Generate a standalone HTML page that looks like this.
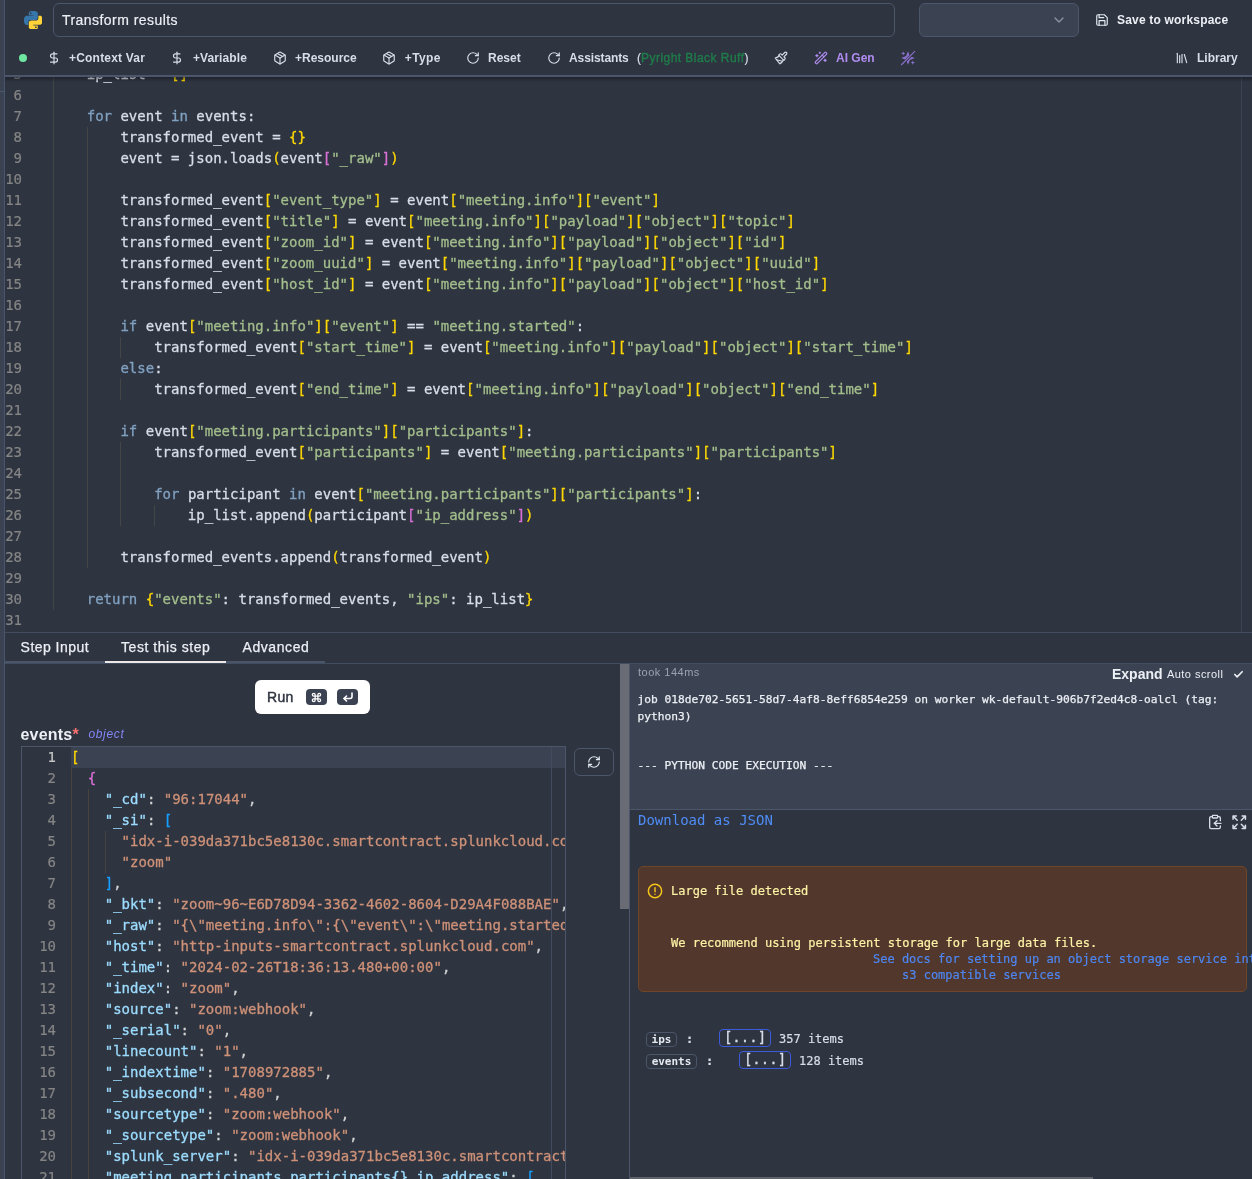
<!DOCTYPE html>
<html lang="en">
<head>
<meta charset="utf-8">
<title>Transform results</title>
<style>
*{box-sizing:border-box;margin:0;padding:0}
html,body{width:1252px;height:1179px;overflow:hidden;background:#2e3440}
#root{position:absolute;left:0;top:0;width:1252px;height:1179px;overflow:hidden;will-change:transform;transform:translateZ(0)}
body{position:relative;font-family:"Liberation Sans",Arial,sans-serif;color:#e5e9f0;-webkit-font-smoothing:antialiased}
.abs{position:absolute}

svg.ic{position:absolute;fill:none;stroke:currentColor;stroke-width:2;stroke-linecap:round;stroke-linejoin:round}
.mono{font-family:"DejaVu Sans Mono","Liberation Mono",monospace}
/* left strip */
#strip{left:0;top:0;width:5px;height:1179px;background:#3b4252;border-right:1px solid #47556e}
/* header */
#title{left:53px;top:3px;width:842px;height:34px;border:1px solid #4c566a;border-radius:6px;font-size:14px;line-height:33px;padding-left:8px;color:#eceff4;letter-spacing:.45px;-webkit-text-stroke:.2px}
#sel{left:919px;top:3px;width:160px;height:34px;border:1px solid #4c566a;border-radius:6px;background:#3b4252}
.tb{position:absolute;top:50px;height:16px;line-height:16px;font-size:12px;font-weight:bold;color:#d8dee9;white-space:nowrap}
#hdrline{left:5px;top:75px;width:1247px;height:2px;background:#4c566a}
/* python editor */
#ed{left:5px;top:77px;width:1247px;height:555px;overflow:hidden}
#edin{position:absolute;left:0;top:-13px;width:100%;}
.ln{position:absolute;left:0;height:21px;line-height:21px;font:14px/21px "DejaVu Sans Mono","Liberation Mono",monospace;color:#d8dee9;white-space:pre;padding-left:48px;-webkit-text-stroke:.3px}
.ln i{position:absolute;left:0;width:17px;text-align:right;font-style:normal;color:#858585;-webkit-text-stroke:.2px}
.k{color:#81a1c1}.s{color:#a3be8c}
.g{position:absolute;width:1px;background:#444546}
/* tabs */
#edline{left:5px;top:632px;width:1247px;height:1px;background:#434c5e}
.tab{position:absolute;top:638px;font-size:14px;line-height:18px;color:#eceff4;white-space:nowrap;-webkit-text-stroke:.25px}
/* json editor */
#je{left:21px;top:746px;width:545px;height:440px;border:1px solid #4c566a;border-bottom:0;overflow:hidden}
.jl{position:absolute;left:0;width:100%;height:21px;font:14px/21px "DejaVu Sans Mono","Liberation Mono",monospace;white-space:pre;color:#d4d4d4;-webkit-text-stroke:.3px}
.jl i{position:absolute;left:0;width:34px;text-align:right;font-style:normal;color:#858585;-webkit-text-stroke:.2px}
.jl b{position:absolute;left:49px;font-weight:normal}
.jl.cur i{color:#c6c6c6}
.jl.cur:before{content:"";position:absolute;left:49px;right:0;top:0;height:21px;background:#3b4252}
.jk{color:#9cdcfe}.jv{color:#ce9178}
.wt{position:absolute;font:12px/16px "DejaVu Sans Mono","Liberation Mono",monospace;color:#fdf2a6;white-space:pre;-webkit-text-stroke:.2px}
.jb{position:absolute;height:15px;border:1px solid #4c566a;border-radius:4px;font:bold 11px/13px "DejaVu Sans Mono","Liberation Mono",monospace;color:#e5e9f0;text-align:center}
.jt{position:absolute;font:12px/16px "DejaVu Sans Mono","Liberation Mono",monospace;color:#d8dee9;white-space:pre;-webkit-text-stroke:.2px}
.jx{position:absolute;width:52px;height:18px;border:1px solid #3b5bdb;border-radius:4px;font:14px/15px "DejaVu Sans Mono","Liberation Mono",monospace;color:#d8dee9;text-align:center;-webkit-text-stroke:.3px}
</style>
</head>
<body><div id="root">
<div id="strip" class="abs"></div>

<!-- ===== header row 1 ===== -->
<svg class="abs" style="left:23.7px;top:10.5px" width="18.6" height="18.6" viewBox="0 0 24 24">
<path fill="#3776ab" d="M14.25.18l.9.2.73.26.59.3.45.32.34.34.25.34.16.33.1.3.04.26.02.2-.01.13V8.5l-.05.63-.13.55-.21.46-.26.38-.3.31-.33.25-.35.19-.35.14-.33.1-.3.07-.26.04-.21.02H8.77l-.69.05-.59.14-.5.22-.41.27-.33.32-.27.35-.2.36-.15.37-.1.35-.07.32-.04.27-.02.21v3.06H3.17l-.21-.03-.28-.07-.32-.12-.35-.18-.36-.26-.36-.36-.35-.46-.32-.59-.28-.73-.21-.88-.14-1.05-.05-1.23.06-1.22.16-1.04.24-.87.32-.71.36-.57.4-.44.42-.33.42-.24.4-.16.36-.1.32-.05.24-.01h.16l.06.01h8.16v-.83H6.18l-.01-2.75-.02-.37.05-.34.11-.31.17-.28.25-.26.31-.23.38-.2.44-.18.51-.15.58-.12.64-.1.71-.06.77-.04.84-.02 1.27.05zm-6.3 1.98l-.23.33-.08.41.08.41.23.34.33.22.41.09.41-.09.33-.22.23-.34.08-.41-.08-.41-.23-.33-.33-.22-.41-.09-.41.09z"/>
<path fill="#ffd43b" d="M21.04 6.11l.28.06.32.12.35.18.36.27.36.35.35.47.32.59.28.73.21.88.14 1.04.05 1.23-.06 1.23-.16 1.04-.24.86-.32.71-.36.57-.4.45-.42.33-.42.24-.4.16-.36.09-.32.05-.24.02-.16-.01h-8.22v.82h5.84l.01 2.76.02.36-.05.34-.11.31-.17.29-.25.25-.31.24-.38.2-.44.17-.51.15-.58.13-.64.09-.71.07-.77.04-.84.01-1.27-.04-1.07-.14-.9-.2-.73-.25-.59-.3-.45-.33-.34-.34-.25-.34-.16-.33-.1-.3-.04-.25-.02-.2.01-.13v-5.34l.05-.64.13-.54.21-.46.26-.38.3-.32.33-.24.35-.2.35-.14.33-.1.3-.06.26-.04.21-.02.13-.01h5.84l.69-.05.59-.14.5-.21.41-.28.33-.32.27-.35.2-.36.15-.36.1-.35.07-.32.04-.28.02-.21V6.07h2.09l.14.01zm-6.47 14.25l-.23.33-.08.41.08.41.23.33.33.23.41.08.41-.08.33-.23.23-.33.08-.41-.08-.41-.23-.33-.33-.23-.41-.08-.41.08z"/>
</svg>
<div id="title" class="abs">Transform results</div>
<div id="sel" class="abs"></div>
<svg class="ic" style="left:1051px;top:12px;color:#8b94a5" width="16" height="16" viewBox="0 0 24 24"><path d="m6 9 6 6 6-6"/></svg>
<svg class="ic" style="left:1095px;top:13px;color:#e5e9f0" width="14" height="14" viewBox="0 0 24 24"><path d="M19 21H5a2 2 0 0 1-2-2V5a2 2 0 0 1 2-2h11l5 5v11a2 2 0 0 1-2 2z"/><polyline points="17 21 17 13 7 13 7 21"/><polyline points="7 3 7 8 15 8"/></svg>
<div class="tb" style="left:1117px;top:12px;color:#eceff4;letter-spacing:.19px">Save to workspace</div>

<!-- ===== header row 2 ===== -->
<div class="abs" style="left:19px;top:54px;width:8px;height:8px;border-radius:50%;background:#6ee7a0"></div>
<svg class="ic" style="left:47px;top:51px;color:#d8dee9" width="14" height="14" viewBox="0 0 24 24"><line x1="12" x2="12" y1="2" y2="22"/><path d="M17 5H9.5a3.5 3.5 0 0 0 0 7h5a3.5 3.5 0 0 1 0 7H6"/></svg>
<div class="tb" style="left:69px;letter-spacing:.2px">+Context Var</div>
<svg class="ic" style="left:170px;top:51px;color:#d8dee9" width="14" height="14" viewBox="0 0 24 24"><line x1="12" x2="12" y1="2" y2="22"/><path d="M17 5H9.5a3.5 3.5 0 0 0 0 7h5a3.5 3.5 0 0 1 0 7H6"/></svg>
<div class="tb" style="left:193px;letter-spacing:.1px">+Variable</div>
<svg class="ic" style="left:273px;top:51px;color:#d8dee9" width="14" height="14" viewBox="0 0 24 24"><path d="m7.5 4.27 9 5.15"/><path d="M21 8a2 2 0 0 0-1-1.73l-7-4a2 2 0 0 0-2 0l-7 4A2 2 0 0 0 3 8v8a2 2 0 0 0 1 1.73l7 4a2 2 0 0 0 2 0l7-4A2 2 0 0 0 21 16Z"/><path d="m3.3 7 8.7 5 8.7-5"/><path d="M12 22V12"/></svg>
<div class="tb" style="left:295px">+Resource</div>
<svg class="ic" style="left:382px;top:51px;color:#d8dee9" width="14" height="14" viewBox="0 0 24 24"><path d="m7.5 4.27 9 5.15"/><path d="M21 8a2 2 0 0 0-1-1.73l-7-4a2 2 0 0 0-2 0l-7 4A2 2 0 0 0 3 8v8a2 2 0 0 0 1 1.73l7 4a2 2 0 0 0 2 0l7-4A2 2 0 0 0 21 16Z"/><path d="m3.3 7 8.7 5 8.7-5"/><path d="M12 22V12"/></svg>
<div class="tb" style="left:404.800px;letter-spacing:.35px">+Type</div>
<svg class="ic" style="left:466px;top:51px;color:#d8dee9" width="14" height="14" viewBox="0 0 24 24"><path d="M21 12a9 9 0 1 1-9-9c2.52 0 4.93 1 6.74 2.74L21 8"/><path d="M21 3v5h-5"/></svg>
<div class="tb" style="left:488px">Reset</div>
<svg class="ic" style="left:547px;top:51px;color:#d8dee9" width="14" height="14" viewBox="0 0 24 24"><path d="M21 12a9 9 0 1 1-9-9c2.52 0 4.93 1 6.74 2.74L21 8"/><path d="M21 3v5h-5"/></svg>
<div class="tb" style="left:569px;letter-spacing:-.1px">Assistants</div>
<div class="tb" id="pyr" style="left:637px;font-weight:normal;-webkit-text-stroke:.2px">(<span style="color:#1f7d4b;letter-spacing:.46px;-webkit-text-stroke:.35px">Pyright Black Ruff</span>)</div>
<svg class="ic" style="left:774px;top:51px;color:#d8dee9" width="14" height="14" viewBox="0 0 24 24"><path d="M18.37 2.63 14 7l-1.59-1.59a2 2 0 0 0-2.82 0L8 7l9 9 1.59-1.59a2 2 0 0 0 0-2.82L17 10l4.37-4.37a2.12 2.12 0 1 0-3-3Z"/><path d="M9 8c-2 3-4 3.500-7 4l8 10c2-1 6-5 6-7"/><path d="M14.500 17.500 4.500 15"/></svg>
<svg class="ic" style="left:813.8px;top:51px;color:#b18cf0" width="14" height="14" viewBox="0 0 24 24"><path d="m21.64 3.64-1.28-1.28a1.21 1.21 0 0 0-1.72 0L2.36 18.64a1.21 1.21 0 0 0 0 1.72l1.28 1.28a1.2 1.2 0 0 0 1.72 0L21.64 5.36a1.2 1.2 0 0 0 0-1.72Z"/><path d="m14 7 3 3"/><path d="M5 6v4"/><path d="M19 14v4"/><path d="M10 2v2"/><path d="M7 8H3"/><path d="M21 16h-4"/><path d="M11 3H9"/></svg>
<div class="tb" style="left:836px;color:#b18cf0">AI Gen</div>
<svg class="abs" style="left:900px;top:50px" width="16" height="16" viewBox="0 0 24 24"><g fill="#8a6fcc"><path d="M12 1.800 14.900 9.100 22.200 12 14.900 14.900 12 22.200 9.100 14.900 1.800 12 9.100 9.100Z"/><path d="M4.800 1.800 5.700 4.300 8.200 5.200 5.700 6.100 4.800 8.600 3.900 6.100 1.400 5.200 3.900 4.300Z"/><path d="M19.200 15.600 20.100 18.100 22.600 19 20.100 19.900 19.200 22.400 18.300 19.900 15.800 19 18.300 18.100Z"/></g><path d="M6 19 18.500 6" stroke="#2e3440" stroke-width="3.800" fill="none"/><path d="M2.200 22.100 22.100 2.200" stroke="#8a6fcc" stroke-width="1.700" stroke-linecap="round" fill="none"/></svg>
<svg class="ic" style="left:1175px;top:51px;color:#d8dee9" width="14" height="14" viewBox="0 0 24 24"><path d="m16 6 4 14"/><path d="M12 6v14"/><path d="M8 8v12"/><path d="M4 4v16"/></svg>
<div class="tb" style="left:1197px">Library</div>
<div id="hdrline" class="abs"></div>
<div class="abs" style="left:5px;top:77px;width:1247px;height:5px;background:linear-gradient(rgba(10,12,18,.42),rgba(10,12,18,0));z-index:5"></div>
<div class="abs" style="left:0;top:91px;width:5px;height:1px;background:#4a5870"></div>

<!-- ===== python editor ===== -->
<div id="ed" class="abs">
<div id="edin">
<div class="ln" style="top:0px"><i>5</i>    ip_list = <span style="color:#ffd700">[</span><span style="color:#ffd700">]</span></div>
<div class="ln" style="top:21px"><i>6</i></div>
<div class="ln" style="top:42px"><i>7</i>    <span class="k">for</span> event <span class="k">in</span> events:</div>
<div class="ln" style="top:63px"><i>8</i>        transformed_event = <span style="color:#ffd700">{</span><span style="color:#ffd700">}</span></div>
<div class="ln" style="top:84px"><i>9</i>        event = json.loads<span style="color:#ffd700">(</span>event<span style="color:#da70d6">[</span><span class="s">&quot;_raw&quot;</span><span style="color:#da70d6">]</span><span style="color:#ffd700">)</span></div>
<div class="ln" style="top:105px"><i>10</i></div>
<div class="ln" style="top:126px"><i>11</i>        transformed_event<span style="color:#ffd700">[</span><span class="s">&quot;event_type&quot;</span><span style="color:#ffd700">]</span> = event<span style="color:#ffd700">[</span><span class="s">&quot;meeting.info&quot;</span><span style="color:#ffd700">]</span><span style="color:#ffd700">[</span><span class="s">&quot;event&quot;</span><span style="color:#ffd700">]</span></div>
<div class="ln" style="top:147px"><i>12</i>        transformed_event<span style="color:#ffd700">[</span><span class="s">&quot;title&quot;</span><span style="color:#ffd700">]</span> = event<span style="color:#ffd700">[</span><span class="s">&quot;meeting.info&quot;</span><span style="color:#ffd700">]</span><span style="color:#ffd700">[</span><span class="s">&quot;payload&quot;</span><span style="color:#ffd700">]</span><span style="color:#ffd700">[</span><span class="s">&quot;object&quot;</span><span style="color:#ffd700">]</span><span style="color:#ffd700">[</span><span class="s">&quot;topic&quot;</span><span style="color:#ffd700">]</span></div>
<div class="ln" style="top:168px"><i>13</i>        transformed_event<span style="color:#ffd700">[</span><span class="s">&quot;zoom_id&quot;</span><span style="color:#ffd700">]</span> = event<span style="color:#ffd700">[</span><span class="s">&quot;meeting.info&quot;</span><span style="color:#ffd700">]</span><span style="color:#ffd700">[</span><span class="s">&quot;payload&quot;</span><span style="color:#ffd700">]</span><span style="color:#ffd700">[</span><span class="s">&quot;object&quot;</span><span style="color:#ffd700">]</span><span style="color:#ffd700">[</span><span class="s">&quot;id&quot;</span><span style="color:#ffd700">]</span></div>
<div class="ln" style="top:189px"><i>14</i>        transformed_event<span style="color:#ffd700">[</span><span class="s">&quot;zoom_uuid&quot;</span><span style="color:#ffd700">]</span> = event<span style="color:#ffd700">[</span><span class="s">&quot;meeting.info&quot;</span><span style="color:#ffd700">]</span><span style="color:#ffd700">[</span><span class="s">&quot;payload&quot;</span><span style="color:#ffd700">]</span><span style="color:#ffd700">[</span><span class="s">&quot;object&quot;</span><span style="color:#ffd700">]</span><span style="color:#ffd700">[</span><span class="s">&quot;uuid&quot;</span><span style="color:#ffd700">]</span></div>
<div class="ln" style="top:210px"><i>15</i>        transformed_event<span style="color:#ffd700">[</span><span class="s">&quot;host_id&quot;</span><span style="color:#ffd700">]</span> = event<span style="color:#ffd700">[</span><span class="s">&quot;meeting.info&quot;</span><span style="color:#ffd700">]</span><span style="color:#ffd700">[</span><span class="s">&quot;payload&quot;</span><span style="color:#ffd700">]</span><span style="color:#ffd700">[</span><span class="s">&quot;object&quot;</span><span style="color:#ffd700">]</span><span style="color:#ffd700">[</span><span class="s">&quot;host_id&quot;</span><span style="color:#ffd700">]</span></div>
<div class="ln" style="top:231px"><i>16</i></div>
<div class="ln" style="top:252px"><i>17</i>        <span class="k">if</span> event<span style="color:#ffd700">[</span><span class="s">&quot;meeting.info&quot;</span><span style="color:#ffd700">]</span><span style="color:#ffd700">[</span><span class="s">&quot;event&quot;</span><span style="color:#ffd700">]</span> == <span class="s">&quot;meeting.started&quot;</span>:</div>
<div class="ln" style="top:273px"><i>18</i>            transformed_event<span style="color:#ffd700">[</span><span class="s">&quot;start_time&quot;</span><span style="color:#ffd700">]</span> = event<span style="color:#ffd700">[</span><span class="s">&quot;meeting.info&quot;</span><span style="color:#ffd700">]</span><span style="color:#ffd700">[</span><span class="s">&quot;payload&quot;</span><span style="color:#ffd700">]</span><span style="color:#ffd700">[</span><span class="s">&quot;object&quot;</span><span style="color:#ffd700">]</span><span style="color:#ffd700">[</span><span class="s">&quot;start_time&quot;</span><span style="color:#ffd700">]</span></div>
<div class="ln" style="top:294px"><i>19</i>        <span class="k">else</span>:</div>
<div class="ln" style="top:315px"><i>20</i>            transformed_event<span style="color:#ffd700">[</span><span class="s">&quot;end_time&quot;</span><span style="color:#ffd700">]</span> = event<span style="color:#ffd700">[</span><span class="s">&quot;meeting.info&quot;</span><span style="color:#ffd700">]</span><span style="color:#ffd700">[</span><span class="s">&quot;payload&quot;</span><span style="color:#ffd700">]</span><span style="color:#ffd700">[</span><span class="s">&quot;object&quot;</span><span style="color:#ffd700">]</span><span style="color:#ffd700">[</span><span class="s">&quot;end_time&quot;</span><span style="color:#ffd700">]</span></div>
<div class="ln" style="top:336px"><i>21</i></div>
<div class="ln" style="top:357px"><i>22</i>        <span class="k">if</span> event<span style="color:#ffd700">[</span><span class="s">&quot;meeting.participants&quot;</span><span style="color:#ffd700">]</span><span style="color:#ffd700">[</span><span class="s">&quot;participants&quot;</span><span style="color:#ffd700">]</span>:</div>
<div class="ln" style="top:378px"><i>23</i>            transformed_event<span style="color:#ffd700">[</span><span class="s">&quot;participants&quot;</span><span style="color:#ffd700">]</span> = event<span style="color:#ffd700">[</span><span class="s">&quot;meeting.participants&quot;</span><span style="color:#ffd700">]</span><span style="color:#ffd700">[</span><span class="s">&quot;participants&quot;</span><span style="color:#ffd700">]</span></div>
<div class="ln" style="top:399px"><i>24</i></div>
<div class="ln" style="top:420px"><i>25</i>            <span class="k">for</span> participant <span class="k">in</span> event<span style="color:#ffd700">[</span><span class="s">&quot;meeting.participants&quot;</span><span style="color:#ffd700">]</span><span style="color:#ffd700">[</span><span class="s">&quot;participants&quot;</span><span style="color:#ffd700">]</span>:</div>
<div class="ln" style="top:441px"><i>26</i>                ip_list.append<span style="color:#ffd700">(</span>participant<span style="color:#da70d6">[</span><span class="s">&quot;ip_address&quot;</span><span style="color:#da70d6">]</span><span style="color:#ffd700">)</span></div>
<div class="ln" style="top:462px"><i>27</i></div>
<div class="ln" style="top:483px"><i>28</i>        transformed_events.append<span style="color:#ffd700">(</span>transformed_event<span style="color:#ffd700">)</span></div>
<div class="ln" style="top:504px"><i>29</i></div>
<div class="ln" style="top:525px"><i>30</i>    <span class="k">return</span> <span style="color:#ffd700">{</span><span class="s">&quot;events&quot;</span>: transformed_events, <span class="s">&quot;ips&quot;</span>: ip_list<span style="color:#ffd700">}</span></div>
<div class="ln" style="top:546px"><i>31</i></div>
<div class="g" style="left:48px;top:0;height:546px"></div>
<div class="g" style="left:82px;top:63px;height:441px"></div>
<div class="g" style="left:115px;top:273px;height:21px"></div>
<div class="g" style="left:115px;top:315px;height:21px"></div>
<div class="g" style="left:115px;top:378px;height:84px"></div>
<div class="g" style="left:149px;top:441px;height:21px"></div>
</div>
<div class="abs" style="left:1236px;top:0;width:1px;height:555px;background:#3b4252"></div>
</div>
<div id="edline" class="abs"></div>

<!-- ===== tabs ===== -->
<div class="tab" style="left:20.600px;letter-spacing:.46px">Step Input</div>
<div class="tab" style="left:121px;letter-spacing:.55px">Test this step</div>
<div class="tab" style="left:242.500px;letter-spacing:.58px">Advanced</div>
<div class="abs" style="left:5px;top:661px;width:320px;height:2px;background:#4a5568"></div>
<div class="abs" style="left:105px;top:661px;width:121px;height:2px;background:#ece8e8"></div>
<div class="abs" style="left:5px;top:663px;width:1247px;height:1px;background:#414c60"></div>

<!-- ===== left pane ===== -->
<div class="abs" style="left:255px;top:680px;width:115px;height:34px;border-radius:6px;background:#fff"></div>
<div class="abs" style="left:267px;top:688px;font-size:14px;line-height:18px;color:#2e3440;letter-spacing:.3px;-webkit-text-stroke:.45px">Run</div>
<div class="abs" style="left:306px;top:689px;width:21px;height:16px;border-radius:4px;background:#3b4252"></div>
<svg class="ic" style="left:311px;top:691.500px;color:#fff;stroke-width:2.800" width="11" height="11" viewBox="0 0 24 24"><path d="M15 6v12a3 3 0 1 0 3-3H6a3 3 0 1 0 3 3V6a3 3 0 1 0-3 3h12a3 3 0 1 0-3-3"/></svg>
<div class="abs" style="left:337px;top:689px;width:21px;height:16px;border-radius:4px;background:#3b4252"></div>
<svg class="ic" style="left:341.500px;top:691.300px;color:#fff;stroke-width:3.200" width="12" height="12" viewBox="0 0 24 24"><polyline points="9 10 4 15 9 20"/><path d="M20 4v7a4 4 0 0 1-4 4H4"/></svg>

<div class="abs" style="left:20.500px;top:726px;font-size:16px;line-height:18px;font-weight:bold;color:#eceff4;letter-spacing:.2px">events<span style="color:#f87171">*</span></div>
<div class="abs" style="left:88.400px;top:726px;font-size:12px;line-height:16px;font-style:italic;color:#8386f5;letter-spacing:.68px">object</div>

<div id="je" class="abs">
<div class="jl cur" style="top:0px"><i>1</i><b><span style="color:#ffd700">[</span></b></div>
<div class="jl" style="top:21px"><i>2</i><b>  <span style="color:#da70d6">{</span></b></div>
<div class="jl" style="top:42px"><i>3</i><b>    <span class="jk">"_cd"</span>: <span class="jv">"96:17044"</span>,</b></div>
<div class="jl" style="top:63px"><i>4</i><b>    <span class="jk">"_si"</span>: <span style="color:#179fff">[</span></b></div>
<div class="jl" style="top:84px"><i>5</i><b>      <span class="jv">"idx-i-039da371bc5e8130c.smartcontract.splunkcloud.com"</span>,</b></div>
<div class="jl" style="top:105px"><i>6</i><b>      <span class="jv">"zoom"</span></b></div>
<div class="jl" style="top:126px"><i>7</i><b>    <span style="color:#179fff">]</span>,</b></div>
<div class="jl" style="top:147px"><i>8</i><b>    <span class="jk">"_bkt"</span>: <span class="jv">"zoom~96~E6D78D94-3362-4602-8604-D29A4F088BAE"</span>,</b></div>
<div class="jl" style="top:168px"><i>9</i><b>    <span class="jk">"_raw"</span>: <span class="jv">"{\"meeting.info\":{\"event\":\"meeting.started\",\"payload\":{}}"</span>,</b></div>
<div class="jl" style="top:189px"><i>10</i><b>    <span class="jk">"host"</span>: <span class="jv">"http-inputs-smartcontract.splunkcloud.com"</span>,</b></div>
<div class="jl" style="top:210px"><i>11</i><b>    <span class="jk">"_time"</span>: <span class="jv">"2024-02-26T18:36:13.480+00:00"</span>,</b></div>
<div class="jl" style="top:231px"><i>12</i><b>    <span class="jk">"index"</span>: <span class="jv">"zoom"</span>,</b></div>
<div class="jl" style="top:252px"><i>13</i><b>    <span class="jk">"source"</span>: <span class="jv">"zoom:webhook"</span>,</b></div>
<div class="jl" style="top:273px"><i>14</i><b>    <span class="jk">"_serial"</span>: <span class="jv">"0"</span>,</b></div>
<div class="jl" style="top:294px"><i>15</i><b>    <span class="jk">"linecount"</span>: <span class="jv">"1"</span>,</b></div>
<div class="jl" style="top:315px"><i>16</i><b>    <span class="jk">"_indextime"</span>: <span class="jv">"1708972885"</span>,</b></div>
<div class="jl" style="top:336px"><i>17</i><b>    <span class="jk">"_subsecond"</span>: <span class="jv">".480"</span>,</b></div>
<div class="jl" style="top:357px"><i>18</i><b>    <span class="jk">"sourcetype"</span>: <span class="jv">"zoom:webhook"</span>,</b></div>
<div class="jl" style="top:378px"><i>19</i><b>    <span class="jk">"_sourcetype"</span>: <span class="jv">"zoom:webhook"</span>,</b></div>
<div class="jl" style="top:399px"><i>20</i><b>    <span class="jk">"splunk_server"</span>: <span class="jv">"idx-i-039da371bc5e8130c.smartcontract.splunkcloud.com"</span>,</b></div>
<div class="jl" style="top:420px"><i>21</i><b>    <span class="jk">"meeting.participants.participants{}.ip_address"</span>: <span style="color:#179fff">[</span></b></div>
<div class="g" style="left:49px;top:21px;height:420px;background:#454240"></div>
<div class="g" style="left:66px;top:42px;height:400px;background:#454240"></div>
<div class="g" style="left:83px;top:84px;height:42px;background:#454240"></div>
<div class="abs" style="left:529px;top:0;width:1px;height:440px;background:#434c5e"></div>
</div>
<div class="abs" style="left:574px;top:748px;width:40px;height:28px;border:1px solid #4c566a;border-radius:6px"></div>
<svg class="ic" style="left:587px;top:755px;color:#e5e9f0" width="14" height="14" viewBox="0 0 24 24"><path d="M3 12a9 9 0 0 1 9-9 9.75 9.75 0 0 1 6.74 2.74L21 8"/><path d="M21 3v5h-5"/><path d="M21 12a9 9 0 0 1-9 9 9.75 9.75 0 0 1-6.74-2.74L3 16"/><path d="M8 16H3v5"/></svg>

<!-- splitter scrollbar -->
<div class="abs" style="left:620px;top:664px;width:9px;height:245px;background:#696c74"></div>

<!-- ===== right pane ===== -->
<div class="abs" style="left:629px;top:664px;width:1px;height:515px;background:#4c566a"></div>
<div class="abs" style="left:630px;top:664px;width:622px;height:146px;background:#3b4252"></div>
<div class="abs" style="left:630px;top:809px;width:622px;height:1px;background:#4c566a"></div>
<div class="abs" style="left:638px;top:665px;font-size:11px;line-height:14px;color:#9aa3b2;letter-spacing:.5px">took 144ms</div>
<div class="abs" style="left:1112px;top:665px;font-size:14px;line-height:18px;font-weight:bold;color:#eceff4">Expand</div>
<div class="abs" style="left:1167px;top:667px;font-size:11px;line-height:14px;color:#eceff4;letter-spacing:.45px">Auto scroll</div>
<svg class="ic" style="left:1233.300px;top:668.500px;color:#eceff4;stroke-width:3.600" width="11" height="11" viewBox="0 0 24 24"><path d="M20 6 9 17l-5-5"/></svg>
<div class="abs mono" style="left:637.500px;top:692px;font-size:11.230px;line-height:16.600px;color:#eceff4;white-space:pre;-webkit-text-stroke:.25px">job 018de702-5651-58d7-4af8-8eff6854e259 on worker wk-default-906b7f2ed4c8-oalcl (tag:
python3)


--- PYTHON CODE EXECUTION ---</div>

<div class="abs mono" style="left:638px;top:810px;font-size:14px;line-height:20px;color:#4f8df7">Download as JSON</div>
<svg class="ic" style="left:1207.200px;top:814px;color:#d8dee9" width="16" height="16" viewBox="0 0 24 24"><rect width="8" height="4" x="8" y="2" rx="1" ry="1"/><path d="M8 4H6a2 2 0 0 0-2 2v14a2 2 0 0 0 2 2h12a2 2 0 0 0 2-2v-2"/><path d="M16 4h2a2 2 0 0 1 2 2v4"/><path d="M21 14H11"/><path d="m15 10-4 4 4 4"/></svg>
<svg class="ic" style="left:1230.800px;top:813.800px;color:#d8dee9;stroke-width:2.200" width="16.500" height="16.500" viewBox="0 0 24 24"><path d="m21 21-6-6m6 6v-4.8m0 4.8h-4.8"/><path d="M3 16.2V21m0 0h4.8M3 21l6-6"/><path d="M21 7.8V3m0 0h-4.8M21 3l-6 6"/><path d="M3 7.8V3m0 0h4.8M3 3l6 6"/></svg>

<div class="abs" style="left:638px;top:866px;width:609px;height:126px;background:#52382c;border:1px solid #6e4526;border-radius:5px"></div>
<svg class="ic" style="left:646.500px;top:883px;color:#f5c518;stroke-width:2.2" width="16" height="16" viewBox="0 0 24 24"><circle cx="12" cy="12" r="10"/><line x1="12" x2="12" y1="7" y2="13"/><line x1="12" x2="12.010" y1="17" y2="17"/></svg>
<div class="wt" style="left:671px;top:883px">Large file detected</div>
<div class="wt" style="left:671px;top:935px">We recommend using persistent storage for large data files.</div>
<div class="wt" style="left:873px;top:951px;width:380px;overflow:hidden;color:#4d86f2">See docs for setting up an object storage service integration</div>
<div class="wt" style="left:902px;top:967px;color:#4d86f2">s3 compatible services</div>

<div class="jb" style="left:646px;top:1032px;width:31px">ips</div>
<div class="jt" style="left:686px;top:1031px;font-weight:bold">:</div>
<div class="jx" style="left:719px;top:1029px">[...]</div>
<div class="jt" style="left:779px;top:1031px">357 items</div>

<div class="jb" style="left:646px;top:1054px;width:51px">events</div>
<div class="jt" style="left:706px;top:1053px;font-weight:bold">:</div>
<div class="jx" style="left:739px;top:1051px">[...]</div>
<div class="jt" style="left:799px;top:1053px">128 items</div>

<div class="abs" style="left:630px;top:1177px;width:463px;height:2px;background:#606369"></div>
</div></body>
</html>
